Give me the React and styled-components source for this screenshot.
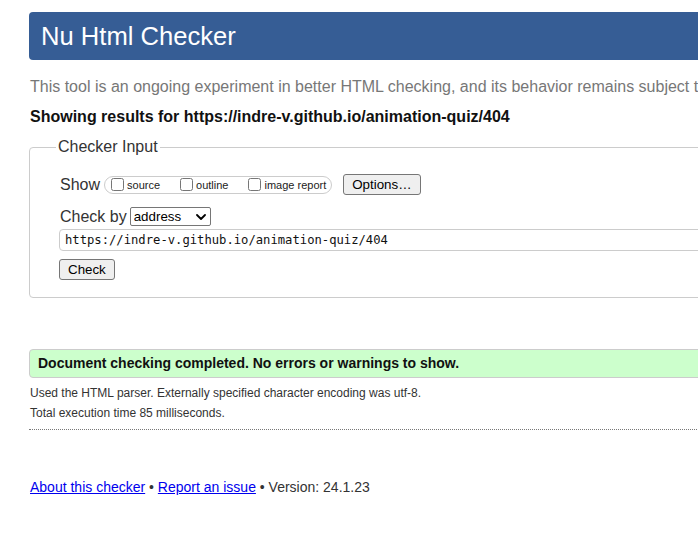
import React from "react";
import styled, { createGlobalStyle } from "styled-components";

const Global = createGlobalStyle`
  html, body {
    margin: 0;
    padding: 0;
    overflow: hidden;
    background: #fff;
  }
  body {
    font-family: "Liberation Sans", Arial, sans-serif;
    color: #222;
  }
`;

const Page = styled.div`
  width: 1100px;
  padding: 12px 0 40px 29px;
`;

const Header = styled.h1`
  margin: 0;
  height: 48px;
  line-height: 48px;
  padding-left: 12px;
  background: #365d95;
  color: #fff;
  font-size: 25.6px;
  font-weight: normal;
  border-radius: 4px;
`;

const Intro = styled.p`
  margin: 17px 0 0 1px;
  font-size: 16px;
  line-height: 20px;
  color: #777;
`;

const Results = styled.p`
  margin: 10px 0 0 1px;
  font-size: 16px;
  line-height: 20px;
  font-weight: bold;
  color: #111;
`;

const Fieldset = styled.fieldset`
  margin: 11px 0 0 0;
  padding: 18px 0 17px 30px;
  border: 1px solid #ccc;
  border-radius: 4px;
  min-width: 0;
`;

const Legend = styled.legend`
  margin-left: -4px;
  padding: 0 2px;
  font-size: 16px;
  color: #333;
`;

const Row = styled.div`
  display: flex;
  align-items: center;
  margin-top: ${(p) => p.$mt || 0}px;
`;

const RowLabel = styled.span`
  font-size: 16px;
  line-height: 18px;
  color: #333;
  margin-right: ${(p) => p.$mr || 0}px;
`;

const Pill = styled.span`
  display: inline-flex;
  align-items: center;
  box-sizing: border-box;
  height: 18px;
  padding: 0 5px 0 2px;
  border: 1px solid #ccc;
  border-radius: 9px;
  gap: 16px;
`;

const CheckLabel = styled.label`
  display: inline-flex;
  align-items: center;
  font-size: 11px;
  color: #222;
`;

const Checkbox = styled.input`
  width: 13px;
  height: 13px;
  margin: 0 3px 0 4px;
`;

const Button = styled.button`
  box-sizing: border-box;
  height: 21px;
  padding: 0 8px;
  margin-left: ${(p) => p.$ml || 0}px;
  margin-top: ${(p) => p.$mt || 0}px;
  background: #efefef;
  border: 1px solid #767676;
  border-radius: 3px;
  font-family: "Liberation Sans", Arial, sans-serif;
  font-size: 13.33px;
  color: #000;
  display: block;
`;

const SelectWrap = styled.span`
  position: relative;
  display: inline-block;
  margin-left: 3px;
`;

const Select = styled.select`
  appearance: none;
  box-sizing: border-box;
  width: 81px;
  height: 19px;
  padding: 0 0 0 3px;
  border: 1px solid #767676;
  border-radius: 2px;
  background: #fff;
  font-family: "Liberation Sans", Arial, sans-serif;
  font-size: 13.33px;
  color: #000;
  display: block;
`;

const Chevron = styled.svg`
  position: absolute;
  right: 5px;
  top: 7px;
  width: 10px;
  height: 6px;
  pointer-events: none;
`;

const UrlInput = styled.input`
  display: block;
  box-sizing: border-box;
  width: 1000px;
  height: 22px;
  margin: 3px 0 0 -1px;
  padding: 0 5px;
  border: 1px solid #ccc;
  border-radius: 4px;
  font-family: "DejaVu Sans Mono", "Liberation Mono", monospace;
  font-size: 12.2px;
  color: #111;
`;

const Success = styled.p`
  margin: 51px 0 0 0;
  padding: 5px 8px;
  background: #ccffcc;
  border: 1px solid #ccc;
  border-radius: 4px;
  font-size: 14px;
  line-height: 17px;
  font-weight: bold;
  color: #111;
`;

const Info = styled.div`
  margin-top: 5px;
  padding-bottom: 6px;
  border-bottom: 1px dotted #777;
`;

const InfoLine = styled.p`
  margin: 0 0 0 1px;
  font-size: 12px;
  line-height: 20px;
  color: #333;
`;

const Footer = styled.p`
  margin: 49px 0 0 1px;
  font-size: 14px;
  line-height: 17px;
  color: #333;
`;

const Link = styled.a`
  color: #00e;
  text-decoration: underline;
`;

export default function App() {
  return (
    <>
      <Global />
      <Page>
        <Header>Nu Html Checker</Header>
        <Intro>
          This tool is an ongoing experiment in better HTML checking, and its
          behavior remains subject to change
        </Intro>
        <Results>
          Showing results for https://indre-v.github.io/animation-quiz/404
        </Results>
        <Fieldset>
          <Legend>Checker Input</Legend>
          <Row>
            <RowLabel $mr={4}>Show</RowLabel>
            <Pill>
              <CheckLabel>
                <Checkbox type="checkbox" />
                source
              </CheckLabel>
              <CheckLabel>
                <Checkbox type="checkbox" />
                outline
              </CheckLabel>
              <CheckLabel>
                <Checkbox type="checkbox" />
                image report
              </CheckLabel>
            </Pill>
            <Button $ml={11}>Options…</Button>
          </Row>
          <Row $mt={12}>
            <RowLabel>Check by</RowLabel>
            <SelectWrap>
              <Select defaultValue="address">
                <option value="address">address</option>
                <option value="file">file upload</option>
                <option value="text">text input</option>
              </Select>
              <Chevron viewBox="0 0 10 6">
                <polyline
                  points="1,1 5,5 9,1"
                  fill="none"
                  stroke="#000"
                  strokeWidth="1.8"
                  strokeLinecap="round"
                  strokeLinejoin="round"
                />
              </Chevron>
            </SelectWrap>
          </Row>
          <UrlInput
            type="url"
            defaultValue="https://indre-v.github.io/animation-quiz/404"
          />
          <Button $mt={8} $ml={-1}>
            Check
          </Button>
        </Fieldset>
        <Success>
          Document checking completed. No errors or warnings to show.
        </Success>
        <Info>
          <InfoLine>
            Used the HTML parser. Externally specified character encoding was
            utf-8.
          </InfoLine>
          <InfoLine>Total execution time 85 milliseconds.</InfoLine>
        </Info>
        <Footer>
          <Link href="#about">About this checker</Link> •{" "}
          <Link href="#issue">Report an issue</Link> • Version: 24.1.23
        </Footer>
      </Page>
    </>
  );
}
